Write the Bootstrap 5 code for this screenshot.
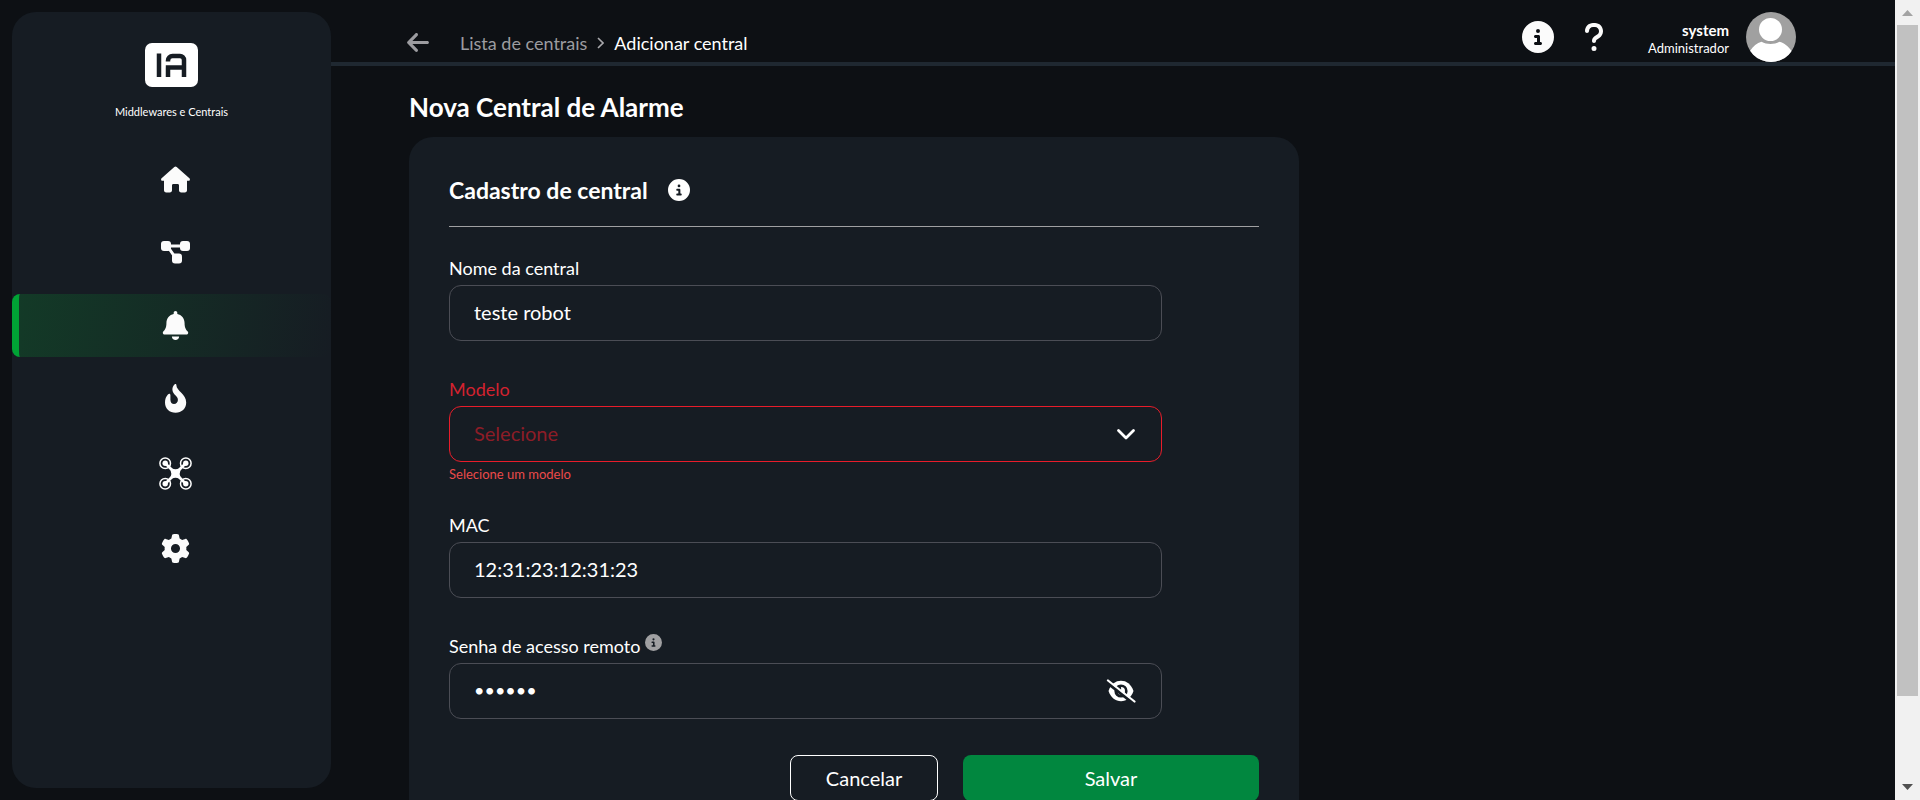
<!DOCTYPE html>
<html lang="pt-BR">
<head>
<meta charset="utf-8">
<meta name="viewport" content="width=device-width, initial-scale=1">
<title>Nova Central de Alarme</title>
<link href="https://cdn.jsdelivr.net/npm/bootstrap@5.3.0/dist/css/bootstrap.min.css" rel="stylesheet">
<style>
  body { background: #0d1014; color: #fff; font-family: Lato, "Open Sans", sans-serif; }
  svg { display: block; flex: none; }
  a, a:hover { color: inherit; text-decoration: none; }
  .side-wrap { padding: 12px 0 12px 12px; }
  .side-panel { width: 319px; background: #161c23; border-radius: 24px; padding-top: 31px; }
  .side-caption { font-size: 11px; line-height: 16px; margin: 17px 0 28px; }
  .side-link { padding: 17px 0; margin-bottom: 10px; border-left: 7px solid transparent; border-radius: 8px; color: #fbfbfb; }
  .side-link.active { border-left-color: #00a335; background: linear-gradient(100deg, #133a27 0%, #161c23 100%) padding-box; }
  .top-bar { height: 66px; border-bottom: 4px solid #1f2831; padding: 12px 99px 0 76px; }
  .trail { font-size: 18px; line-height: 24px; gap: 10px; margin-top: 18px; }
  .trail-back { width: 43px; }
  .muted-tone, .muted-tone:hover { color: #9c9ca0; }
  .user-box { margin-left: 14px; gap: 17px; }
  .user-name { font-size: 15px; line-height: 18px; font-weight: 700; }
  .user-role { font-size: 13px; line-height: 18px; }
  .top-actions { gap: 30px; }
  .content { padding: 25px 78px 0; }
  .page-title { font-size: 26px; line-height: 32px; font-weight: 700; margin: 0 0 14px; }
  .form-panel { max-width: 890px; background: #161c23; border-radius: 24px; padding: 39px 40px 40px; }
  .panel-title { font-size: 23px; line-height: 28px; font-weight: 700; margin: 0; }
  .panel-head { border-bottom: 1px solid #a0a0a2; padding-bottom: 22px; margin-bottom: 29px; gap: 20px; }
  .field { width: 88%; margin-bottom: 36px; }
  .field-with-error { margin-bottom: 31px; }
  .field label { font-size: 18px; line-height: 24px; margin-bottom: 5px; }
  .field .form-control, .field .form-select { height: 56px; font-size: 20px; color: #fff; background: transparent; border: 1px solid #4b4d55; border-radius: 12px; padding: 0 24px 2px; }
  .field .form-control[type=password] { font-size: 18px; }
  .field .form-select.is-invalid { border-color: #e81c2a; color: #8d1c27; }
  .label-invalid { color: #d3222f; }
  .field-error { font-size: 13px; line-height: 16px; color: #eb4a4a; margin-top: 4px; }
  .inside-icon { right: 26px; top: 50%; transform: translateY(-50%); color: #fff; }
  .panel-actions { gap: 25px; }
  .panel-btn, .panel-btn:hover { height: 46px; font-size: 20px; border-radius: 8px; color: #fff; }
  .btn-cancel { width: 148px; border: 1px solid #fff; }
  .btn-save, .btn-save:hover { width: 296px; background: #01873f; border: 0; }
  .scroll-rail { width: 25px; background: #f1f1f1; padding: 10px 2px; }
  .scroll-thumb { background: #c1c1c1; height: 86%; width: 21px; margin-top: 9px; }
</style>
</head>
<body>
<div class="d-flex vh-100 overflow-hidden">

  <div class="side-wrap d-flex flex-shrink-0">
    <aside class="side-panel d-flex flex-column align-items-stretch">
      <a href="#" class="d-flex flex-column align-items-center" aria-label="Início IA">
        <svg width="53" height="44" viewBox="0 0 53 44">
          <rect width="53" height="44" rx="7" fill="#fff"/>
          <path d="M14 10.500v23.500M23 18.500v-1a4.500 4.500 0 0 1 4.500-4.500h7.500a4 4 0 0 1 4 4v17M20.800 24.500h18M23 24.500v9.500" fill="none" stroke="#161c23" stroke-width="4.500"/>
        </svg>
        <div class="side-caption">Middlewares e Centrais</div>
      </a>
      <nav class="nav flex-column">
        <a href="#" class="side-link d-flex justify-content-center" aria-label="Home">
          <svg width="29" height="29" viewBox="0 0 29 29" fill="currentColor"><path d="M13.300 2.100a1.900 1.900 0 0 1 2.400 0l12.700 11.200c1 .9.500 2.400-.8 2.400H26v9.600c0 1.300-.9 2.200-2.200 2.200h-3.600c-1.300 0-2.200-.9-2.200-2.200v-4.800c0-.8-.6-1.400-1.400-1.400h-4.200c-.8 0-1.400.6-1.400 1.400v4.800c0 1.300-.9 2.200-2.200 2.200H5.200C3.900 27.500 3 26.600 3 25.300v-9.600H1.400c-1.300 0-1.800-1.500-.8-2.400z"/></svg>
        </a>
        <a href="#" class="side-link d-flex justify-content-center" aria-label="Middlewares">
          <svg width="29" height="29" viewBox="0 0 29 29" fill="currentColor"><rect y="3" width="10" height="10" rx="3"/><rect x="19" y="3" width="10" height="10" rx="3"/><rect x="11" y="15.500" width="10" height="10" rx="3"/><path d="M7 8h15M7 9l7 10" stroke="currentColor" stroke-width="3"/></svg>
        </a>
        <a href="#" class="side-link active d-flex justify-content-center" aria-label="Centrais de alarme">
          <svg width="29" height="29" viewBox="0 0 448 512" fill="currentColor"><path d="M224 512c35.320 0 63.970-28.650 63.970-64H160.030c0 35.350 28.650 64 63.970 64zm215.390-149.710c-19.320-20.760-55.470-51.990-55.470-154.290 0-77.700-54.480-139.900-127.940-155.160V32c0-17.670-14.320-32-31.980-32s-31.980 14.330-31.980 32v20.840C118.560 68.100 64.080 130.300 64.080 208c0 102.300-36.150 133.530-55.470 154.290-6 6.450-8.660 14.160-8.610 21.710.11 16.400 12.980 32 32.100 32h383.800c19.120 0 32-15.600 32.100-32 .05-7.550-2.610-15.270-8.610-21.710z"/></svg>
        </a>
        <a href="#" class="side-link d-flex justify-content-center" aria-label="Incêndio">
          <svg width="29" height="29" viewBox="0 0 29 29" fill="currentColor"><path d="M13.500.5c.8-.7 1.900-.5 1.900.8 0 5.500 9.800 9 9.800 17.200 0 6-4.600 10.300-10.600 10.300S4 24.600 4 18.500c0-3.200 1-6 2.900-8 1.300-1.400 2.500-.9 2.500.6v4.600c0 2.800 1.500 4.300 3.600 4.300 2.300 0 3.900-1.700 3.900-4 0-2-1-3-2.300-4.400-1.700-1.800-3.200-3.700-3.200-6.200 0-1.900.8-3.800 2.100-4.900z"/></svg>
        </a>
        <a href="#" class="side-link d-flex justify-content-center" aria-label="Drones">
          <svg width="33" height="33" viewBox="0 0 33 33"><g fill="none" stroke="#fff" stroke-width="1.500"><circle cx="6.200" cy="6.200" r="5.300"/><circle cx="26.800" cy="6.200" r="5.300"/><circle cx="6.200" cy="26.800" r="5.300"/><circle cx="26.800" cy="26.800" r="5.300"/></g><path d="M6 6l21 21M27 6L6 27" stroke="#fff" stroke-width="2.600"/><g fill="#fff"><circle cx="6.200" cy="6.200" r="2.700"/><circle cx="26.800" cy="6.200" r="2.700"/><circle cx="6.200" cy="26.800" r="2.700"/><circle cx="26.800" cy="26.800" r="2.700"/><path d="M8 7l5 4.500q3.500 1.500 7 0L25 7l1 1-4.500 5q-1.500 3.500 0 7l4.500 5-1 1-5-4.500q-3.500-1.500-7 0L8 26l-1-1 4.500-5q1.500-3.500 0-7L7 8z"/></g></svg>
        </a>
        <a href="#" class="side-link d-flex justify-content-center" aria-label="Configurações">
          <svg width="29" height="29" viewBox="0 0 512 512" fill="currentColor"><path d="M495.900 166.600c3.200 8.700 .5 18.400-6.400 24.600l-43.300 39.400c1.100 8.300 1.700 16.800 1.700 25.400s-.6 17.100-1.700 25.400l43.300 39.400c6.900 6.200 9.600 15.900 6.400 24.600c-4.400 11.900-9.700 23.300-15.800 34.300l-4.700 8.100c-6.600 11-14 21.400-22.100 31.200c-5.900 7.200-15.700 9.600-24.500 6.800l-55.700-17.700c-13.400 10.300-28.200 18.900-44 25.400l-12.500 57.100c-2 9.100-9 16.300-18.200 17.800c-13.800 2.300-28 3.500-42.500 3.500s-28.700-1.200-42.500-3.500c-9.200-1.500-16.200-8.700-18.200-17.800l-12.500-57.100c-15.800-6.500-30.600-15.100-44-25.400L83.100 425.900c-8.800 2.800-18.600 .3-24.500-6.800c-8.100-9.800-15.500-20.200-22.100-31.200l-4.700-8.100c-6.100-11-11.400-22.400-15.800-34.300c-3.200-8.700-.5-18.400 6.400-24.600l43.300-39.400C64.600 273.100 64 264.600 64 256s.6-17.100 1.700-25.400L22.400 191.200c-6.900-6.200-9.600-15.900-6.400-24.600c4.400-11.900 9.700-23.300 15.800-34.300l4.700-8.100c6.600-11 14-21.400 22.100-31.200c5.900-7.200 15.700-9.600 24.500-6.800l55.700 17.700c13.400-10.300 28.200-18.900 44-25.400l12.500-57.100c2-9.100 9-16.300 18.200-17.800C227.300 1.200 241.500 0 256 0s28.700 1.200 42.500 3.500c9.200 1.500 16.200 8.700 18.200 17.800l12.500 57.100c15.800 6.500 30.600 15.100 44 25.400l55.700-17.700c8.800-2.800 18.600-.3 24.500 6.800c8.100 9.800 15.500 20.200 22.100 31.200l4.700 8.100c6.100 11 11.400 22.400 15.800 34.300zM256 336a80 80 0 1 0 0-160 80 80 0 1 0 0 160z"/></svg>
        </a>
      </nav>
    </aside>
  </div>

  <div class="flex-grow-1 overflow-hidden">
    <header class="top-bar d-flex justify-content-between align-items-start">
      <nav class="trail d-flex align-items-center" aria-label="Trilha">
        <a href="#" class="trail-back muted-tone" aria-label="Voltar"><svg width="22" height="25" viewBox="0 0 448 512" fill="currentColor"><path d="M9.400 233.400c-12.500 12.500-12.500 32.800 0 45.300l160 160c12.500 12.500 32.800 12.500 45.300 0s12.500-32.800 0-45.300L109.200 288 416 288c17.700 0 32-14.300 32-32s-14.300-32-32-32l-306.700 0L214.600 118.600c12.500-12.500 12.500-32.800 0-45.300s-32.800-12.500-45.300 0l-160 160z"/></svg></a>
        <a href="#" class="muted-tone">Lista de centrais</a>
        <svg width="7" height="12" viewBox="0 0 7 12" fill="none" stroke="#a8a8ac" stroke-width="1.600"><path d="M1 1l5 5-5 5"/></svg>
        <span aria-current="page">Adicionar central</span>
      </nav>
      <div class="top-actions d-flex align-items-center">
        <button class="btn p-0 border-0" aria-label="Informações"><svg width="32" height="32" viewBox="0 0 512 512" fill="#fbfbfb"><path d="M256 512A256 256 0 1 0 256 0a256 256 0 1 0 0 512zM216 336h24V272H216c-13.300 0-24-10.700-24-24s10.700-24 24-24h48c13.300 0 24 10.700 24 24v88h8c13.300 0 24 10.700 24 24s-10.700 24-24 24H216c-13.300 0-24-10.700-24-24s10.700-24 24-24zm40-208a32 32 0 1 1 0 64 32 32 0 1 1 0-64z"/></svg></button>
        <button class="btn p-0 border-0" aria-label="Ajuda"><svg width="20" height="32" viewBox="0 0 320 512" fill="#fbfbfb"><path d="M80 160c0-35.300 28.700-64 64-64h32c35.300 0 64 28.700 64 64v3.600c0 21.800-11.100 42.100-29.400 53.800l-42.200 27.100c-25.200 16.200-40.400 44.100-40.400 74V320c0 17.700 14.300 32 32 32s32-14.300 32-32v-1.400c0-8.200 4.200-15.800 11-20.200l42.200-27.100c36.600-23.600 58.800-64.100 58.800-107.700V160c0-70.700-57.300-128-128-128H144C73.300 32 16 89.300 16 160c0 17.700 14.300 32 32 32s32-14.300 32-32zm80 320a40 40 0 1 0 0-80 40 40 0 1 0 0 80z"/></svg></button>
        <div class="user-box d-flex align-items-center">
          <div class="text-end pt-1">
            <div class="user-name">system</div>
            <div class="user-role">Administrador</div>
          </div>
          <svg width="50" height="50" viewBox="0 0 50 50"><clipPath id="round"><circle cx="25" cy="25" r="25"/></clipPath><g clip-path="url(#round)"><rect width="50" height="50" fill="#a0a0a0"/><g fill="#fff"><circle cx="24.500" cy="17.500" r="11.500"/><path d="M4 39c3-5 7-8 11.500-9.300 5.500 3 12.500 3 18 0C38 31 43 34.500 45.500 39v12H4z"/></g></g></svg>
        </div>
      </div>
    </header>

    <main class="content">
      <h1 class="page-title">Nova Central de Alarme</h1>
      <form class="form-panel">
        <div class="panel-head d-flex align-items-center">
          <h2 class="panel-title">Cadastro de central</h2>
          <svg width="22" height="22" viewBox="0 0 512 512" fill="#fff"><path d="M256 512A256 256 0 1 0 256 0a256 256 0 1 0 0 512zM216 336h24V272H216c-13.300 0-24-10.700-24-24s10.700-24 24-24h48c13.300 0 24 10.700 24 24v88h8c13.300 0 24 10.700 24 24s-10.700 24-24 24H216c-13.300 0-24-10.700-24-24s10.700-24 24-24zm40-208a32 32 0 1 1 0 64 32 32 0 1 1 0-64z"/></svg>
        </div>

        <div class="field">
          <label class="d-block" for="nome">Nome da central</label>
          <input class="form-control" id="nome" type="text" value="teste robot">
        </div>

        <div class="field field-with-error">
          <label class="d-block label-invalid" for="modelo">Modelo</label>
          <div class="position-relative">
            <select class="form-select is-invalid" id="modelo"><option>Selecione</option></select>
            <svg class="inside-icon position-absolute pe-none" width="20" height="12" viewBox="0 0 20 12" fill="none" stroke="currentColor" stroke-width="2.800" stroke-linecap="round" stroke-linejoin="round"><path d="M2.500 2.500l7.500 7.500 7.500-7.500"/></svg>
          </div>
          <div class="field-error">Selecione um modelo</div>
        </div>

        <div class="field">
          <label class="d-block" for="mac">MAC</label>
          <input class="form-control" id="mac" type="text" value="12:31:23:12:31:23">
        </div>

        <div class="field">
          <div class="d-flex gap-1">
            <label for="senha">Senha de acesso remoto</label>
            <svg width="17" height="17" viewBox="0 0 512 512" fill="#a0a0a2"><path d="M256 512A256 256 0 1 0 256 0a256 256 0 1 0 0 512zM216 336h24V272H216c-13.300 0-24-10.700-24-24s10.700-24 24-24h48c13.300 0 24 10.700 24 24v88h8c13.300 0 24 10.700 24 24s-10.700 24-24 24H216c-13.300 0-24-10.700-24-24s10.700-24 24-24zm40-208a32 32 0 1 1 0 64 32 32 0 1 1 0-64z"/></svg>
          </div>
          <div class="position-relative">
            <input class="form-control" id="senha" type="password" value="123456">
            <button type="button" class="inside-icon btn p-0 border-0 position-absolute" aria-label="Mostrar senha">
              <svg width="30" height="24" viewBox="0 0 30 24"><path d="M2.500 12C5 5 9.500 1.800 15 1.800S25 5 27.500 12C25 19 20.500 22.200 15 22.200S5 19 2.500 12z" fill="#fff"/><circle cx="15" cy="12" r="6.600" fill="#161c23"/><path d="M15 8a4 4 0 0 1 0 8 4 4 0 0 1-3.500-3c2.500.8 4.300-1.200 3.500-5z" fill="#fff"/><path d="M1 3.500l26.500 21" stroke="#161c23" stroke-width="3"/><path d="M2 1.500l26.500 21" stroke="#fff" stroke-width="2.200" stroke-linecap="round"/></svg>
            </button>
          </div>
        </div>

        <div class="panel-actions d-flex justify-content-end">
          <button type="button" class="btn panel-btn btn-cancel">Cancelar</button>
          <button type="submit" class="btn panel-btn btn-save">Salvar</button>
        </div>
      </form>
    </main>
  </div>

  <div class="scroll-rail d-flex flex-column flex-shrink-0" aria-hidden="true">
    <svg class="align-self-center" width="11" height="6" viewBox="0 0 11 6"><path d="M0 6L5.500 0 11 6z" fill="#a3a3a3"/></svg>
    <div class="scroll-thumb"></div>
    <svg class="align-self-center mt-auto" width="11" height="6" viewBox="0 0 11 6"><path d="M0 0h11L5.500 6z" fill="#505050"/></svg>
  </div>
</div>
<script src="https://cdn.jsdelivr.net/npm/bootstrap@5.3.0/dist/js/bootstrap.bundle.min.js"></script>
</body>
</html>
